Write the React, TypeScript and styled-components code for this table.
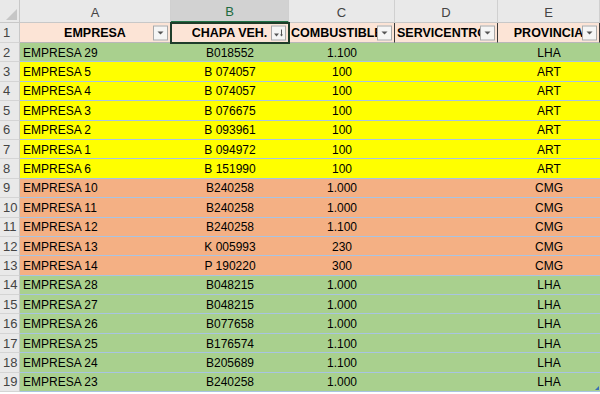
import React from 'react';
import styled, { createGlobalStyle } from 'styled-components';

const GlobalStyle = createGlobalStyle`
    html, body {
        margin: 0;
        padding: 0;
        background: #ffffff;
    }
    body {
        font-family: 'Liberation Sans', Arial, sans-serif;
    }
`;

type Fill = 'green' | 'yellow' | 'orange';

const fills: Record<Fill, string> = {
    green: '#a9d08e',
    yellow: '#ffff00',
    orange: '#f4b084',
};

interface Row {
    company: number;
    plate: string;
    fuel: string;
    province: string;
    fill: Fill;
}

const rows: Row[] = [
    { company: 29, plate: 'B018552', fuel: '1.100', province: 'LHA', fill: 'green' },
    { company: 5, plate: 'B 074057', fuel: '100', province: 'ART', fill: 'yellow' },
    { company: 4, plate: 'B 074057', fuel: '100', province: 'ART', fill: 'yellow' },
    { company: 3, plate: 'B 076675', fuel: '100', province: 'ART', fill: 'yellow' },
    { company: 2, plate: 'B 093961', fuel: '100', province: 'ART', fill: 'yellow' },
    { company: 1, plate: 'B 094972', fuel: '100', province: 'ART', fill: 'yellow' },
    { company: 6, plate: 'B 151990', fuel: '100', province: 'ART', fill: 'yellow' },
    { company: 10, plate: 'B240258', fuel: '1.000', province: 'CMG', fill: 'orange' },
    { company: 11, plate: 'B240258', fuel: '1.000', province: 'CMG', fill: 'orange' },
    { company: 12, plate: 'B240258', fuel: '1.100', province: 'CMG', fill: 'orange' },
    { company: 13, plate: 'K 005993', fuel: '230', province: 'CMG', fill: 'orange' },
    { company: 14, plate: 'P 190220', fuel: '300', province: 'CMG', fill: 'orange' },
    { company: 28, plate: 'B048215', fuel: '1.000', province: 'LHA', fill: 'green' },
    { company: 27, plate: 'B048215', fuel: '1.000', province: 'LHA', fill: 'green' },
    { company: 26, plate: 'B077658', fuel: '1.000', province: 'LHA', fill: 'green' },
    { company: 25, plate: 'B176574', fuel: '1.100', province: 'LHA', fill: 'green' },
    { company: 24, plate: 'B205689', fuel: '1.100', province: 'LHA', fill: 'green' },
    { company: 23, plate: 'B240258', fuel: '1.000', province: 'LHA', fill: 'green' },
];

const Sheet = styled.div`
    display: grid;
    grid-template-columns: 20px 151px 118px 106px 103px 102px;
    grid-template-rows: 23px 20px repeat(18, 19.4px);
    width: 600px;
    height: 394px;
    overflow: hidden;
    font-size: 12px;
    color: #000;
`;

const Corner = styled.div`
    position: relative;
    background: #e9e9e9;
    border-right: 1px solid #c8c8c8;
    border-bottom: 1px solid #c8c8c8;
    box-sizing: border-box;
    &::after {
        content: '';
        position: absolute;
        right: 2px;
        bottom: 2px;
        border-style: solid;
        border-width: 0 0 11px 11px;
        border-color: transparent transparent #c6c6c6 transparent;
    }
`;

const ColHead = styled.div<{ $active?: boolean }>`
    display: flex;
    align-items: center;
    justify-content: center;
    box-sizing: border-box;
    font-size: 13px;
    padding-top: 2px;
    background: ${(p) => (p.$active ? '#d2d2d2' : '#e9e9e9')};
    color: ${(p) => (p.$active ? '#1e6b3f' : '#444')};
    border-right: 1px solid #d0d0d0;
    border-bottom: ${(p) => (p.$active ? '2px solid #217346' : '1px solid #c8c8c8')};
`;

const RowHead = styled.div`
    display: flex;
    align-items: center;
    box-sizing: border-box;
    padding-left: 3px;
    font-size: 13px;
    color: #444;
    background: #e9e9e9;
    border-right: 1px solid #c8c8c8;
    border-bottom: 1px solid #d4d4d4;
`;

const HeaderCell = styled.div<{ $align?: 'left' | 'center'; $selected?: boolean }>`
    position: relative;
    display: flex;
    align-items: center;
    justify-content: ${(p) => (p.$align === 'left' ? 'flex-start' : 'center')};
    padding-left: ${(p) => (p.$align === 'left' ? '2px' : '0')};
    box-sizing: border-box;
    overflow: hidden;
    white-space: nowrap;
    font-weight: bold;
    font-size: 12.5px;
    background: #fce4d6;
    border-right: 1px solid #3a3a3a;
    border-bottom: 1px solid #b8b8b8;
    ${(p) => (p.$selected ? 'outline: 2px solid #1f3d2a; outline-offset: -1px; z-index: 2;' : '')}
`;

const HeaderText = styled.span<{ $clip?: boolean }>`
    display: block;
    overflow: hidden;
    white-space: nowrap;
    ${(p) => (p.$clip ? 'max-width: calc(100% - 17px);' : '')}
`;

const FilterButton = styled.span`
    position: absolute;
    right: 2px;
    top: 50%;
    transform: translateY(-50%);
    width: 15px;
    height: 15px;
    box-sizing: border-box;
    display: flex;
    align-items: center;
    justify-content: center;
    background: #f5f5f5;
    border: 1px solid #a9a9a9;
    z-index: 3;
`;

const DataCell = styled.div<{ $fill: Fill; $align?: 'left' | 'center' }>`
    position: relative;
    display: flex;
    align-items: center;
    justify-content: ${(p) => (p.$align === 'left' ? 'flex-start' : 'center')};
    padding-left: ${(p) => (p.$align === 'left' ? '3px' : '0')};
    padding-top: 1px;
    box-sizing: border-box;
    white-space: nowrap;
    font-size: 12px;
    background: ${(p) => fills[p.$fill]};
    border-bottom: 1px solid #a8c4e2;
`;

const ResizeMark = styled.span`
    position: absolute;
    right: 1px;
    bottom: 1px;
    border-style: solid;
    border-width: 0 0 4px 4px;
    border-color: transparent transparent #3c6fb4 transparent;
`;

function FilterIcon({ sorted }: { sorted?: boolean }): JSX.Element {
    if (sorted) {
        return (
            <svg width='11' height='9' viewBox='0 0 11 9'>
                <path d='M1 5h5L3.5 8z' fill='#555' />
                <path d='M8.5 1v6.5' stroke='#555' strokeWidth='1' />
                <path d='M7 6l1.5 2 1.5-2z' fill='#555' />
            </svg>
        );
    }

    return (
        <svg width='9' height='6' viewBox='0 0 9 6'>
            <path d='M1.5 2h6L4.5 5z' fill='#555' />
        </svg>
    );
}

const columns = ['A', 'B', 'C', 'D', 'E'];

export default function App(): JSX.Element {
    return (
        <>
            <GlobalStyle />
            <Sheet>
                <Corner />
                {columns.map((c) => (
                    <ColHead key={c} $active={c === 'B'}>
                        {c}
                    </ColHead>
                ))}

                <RowHead>1</RowHead>
                <HeaderCell>
                    <HeaderText>EMPRESA</HeaderText>
                    <FilterButton><FilterIcon /></FilterButton>
                </HeaderCell>
                <HeaderCell $selected>
                    <HeaderText>CHAPA VEH.</HeaderText>
                    <FilterButton><FilterIcon sorted /></FilterButton>
                </HeaderCell>
                <HeaderCell $align='left'>
                    <HeaderText $clip>COMBUSTIBLE, LTS</HeaderText>
                    <FilterButton><FilterIcon /></FilterButton>
                </HeaderCell>
                <HeaderCell $align='left'>
                    <HeaderText $clip>SERVICENTRO</HeaderText>
                    <FilterButton><FilterIcon /></FilterButton>
                </HeaderCell>
                <HeaderCell>
                    <HeaderText>PROVINCIA</HeaderText>
                    <FilterButton><FilterIcon /></FilterButton>
                </HeaderCell>

                {rows.map((row, i) => (
                    <React.Fragment key={i}>
                        <RowHead>{i + 2}</RowHead>
                        <DataCell $fill={row.fill} $align='left'>EMPRESA {row.company}</DataCell>
                        <DataCell $fill={row.fill}>{row.plate}</DataCell>
                        <DataCell $fill={row.fill}>{row.fuel}</DataCell>
                        <DataCell $fill={row.fill} />
                        <DataCell $fill={row.fill}>
                            {row.province}
                            {i === rows.length - 1 && <ResizeMark />}
                        </DataCell>
                    </React.Fragment>
                ))}
            </Sheet>
        </>
    );
}
